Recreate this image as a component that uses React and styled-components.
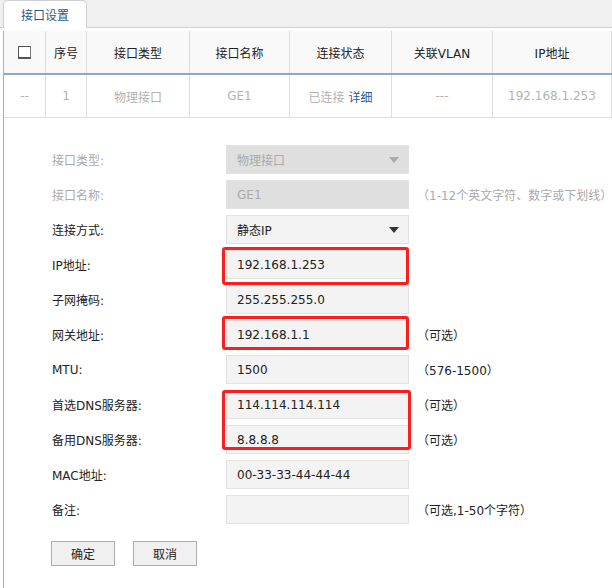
import React from 'react';
import styled, { createGlobalStyle } from 'styled-components';

const GlobalStyle = createGlobalStyle`
  body {
    margin: 0;
    background: #ffffff;
    font-family: "DejaVu Sans", "Noto Sans CJK SC", sans-serif;
    font-size: 12px;
    color: #222222;
  }
`;

const Page = styled.div`
  width: 612px;
  height: 588px;
  overflow: hidden;
  background: #ffffff;
`;

const TabBar = styled.div`
  height: 27px;
  background: #f0f0f0;
  border-bottom: 1px solid #cfcfcf;
  padding-left: 3px;
  display: flex;
  align-items: flex-end;
`;

const Tab = styled.div`
  width: 84px;
  height: 28px;
  margin-bottom: -1px;
  box-sizing: border-box;
  background: #ffffff;
  border: 1px solid #cfcfcf;
  border-bottom: none;
  border-radius: 5px 5px 0 0;
  display: flex;
  align-items: center;
  justify-content: center;
  color: #2b5886;
  font-size: 12px;
`;

const Content = styled.div`
  margin-top: 3px;
  margin-left: 3px;
  border-left: 1px solid #a3b3c4;
`;

const Table = styled.table`
  width: 100%;
  border-collapse: collapse;
  table-layout: fixed;
`;

const HeadCell = styled.th`
  width: ${(p) => p.$w || 'auto'};
  height: 42px;
  padding: 0;
  background: #f9f9f9;
  border-right: 1px solid #dddddd;
  border-bottom: 2px solid #8fa7bf;
  font-weight: normal;
  font-size: 12px;
  color: #222222;
  text-align: center;
`;

const Cell = styled.td`
  height: 42px;
  padding: 0;
  border-right: 1px solid #dddddd;
  border-bottom: 1px solid #dddddd;
  text-align: center;
  color: #b3b3b3;
  font-size: 12px;
  white-space: nowrap;
`;

const DetailLink = styled.span`
  color: #1c5c9a;
  margin-left: 4px;
`;

const CheckBox = styled.span`
  display: inline-block;
  width: 11px;
  height: 10px;
  border: 1px solid #555555;
  border-bottom-width: 2px;
  border-right-color: #777777;
  background: #ffffff;
  vertical-align: middle;
`;

const FormPanel = styled.div`
  position: relative;
  padding: 27px 0 40px 48px;
`;

const FormGrid = styled.div`
  display: grid;
  grid-template-columns: 174px 183px auto;
  row-gap: 6px;
  align-items: center;
`;

const Label = styled.div`
  color: ${(p) => (p.$disabled ? '#aaaaaa' : '#222222')};
  font-size: 12px;
`;

const Field = styled.input`
  box-sizing: border-box;
  width: 183px;
  height: 29px;
  margin: 0;
  padding: 0 10px;
  border: 1px solid #e2e2e2;
  background: ${(p) => (p.disabled ? '#dfdfdf' : '#f3f3f3')};
  color: ${(p) => (p.disabled ? '#aaaaaa' : '#222222')};
  font-family: "DejaVu Sans", "Noto Sans CJK SC", sans-serif;
  font-size: 12px;
  outline: none;
`;

const Select = styled.div`
  box-sizing: border-box;
  width: 183px;
  height: 29px;
  padding: 0 9px 0 10px;
  border: 1px solid #e2e2e2;
  background: ${(p) => (p.$disabled ? '#dfdfdf' : '#f3f3f3')};
  color: ${(p) => (p.$disabled ? '#aaaaaa' : '#222222')};
  display: flex;
  align-items: center;
  justify-content: space-between;
`;

const Arrow = styled.span`
  width: 0;
  height: 0;
  border-left: 5px solid transparent;
  border-right: 5px solid transparent;
  border-top: 6px solid ${(p) => (p.$disabled ? '#aaaaaa' : '#333333')};
`;

const Hint = styled.div`
  padding-left: 8px;
  color: ${(p) => (p.$muted ? '#aaaaaa' : '#222222')};
  font-size: 12px;
  white-space: nowrap;
`;

const ButtonRow = styled.div`
  display: flex;
  gap: 18px;
  margin-top: 17px;
  margin-left: -1px;
`;

const Button = styled.button`
  width: 64px;
  height: 25px;
  margin: 0;
  padding: 0;
  background: #f0f0f0;
  border: 1px solid #acacac;
  font-family: "DejaVu Sans", "Noto Sans CJK SC", sans-serif;
  font-size: 12px;
  color: #222222;
`;

const Mark = styled.div`
  position: absolute;
  left: 218px;
  box-sizing: border-box;
  border: 3px solid #fa1e1e;
  border-radius: 3px;
  pointer-events: none;
`;

const rows = [
  { label: '接口类型:', kind: 'select', value: '物理接口', disabled: true },
  { label: '接口名称:', value: 'GE1', disabled: true, hint: '（1-12个英文字符、数字或下划线）', muted: true },
  { label: '连接方式:', kind: 'select', value: '静态IP' },
  { label: 'IP地址:', value: '192.168.1.253' },
  { label: '子网掩码:', value: '255.255.255.0' },
  { label: '网关地址:', value: '192.168.1.1', hint: '（可选）' },
  { label: 'MTU:', value: '1500', hint: '（576-1500）' },
  { label: '首选DNS服务器:', value: '114.114.114.114', hint: '（可选）' },
  { label: '备用DNS服务器:', value: '8.8.8.8', hint: '（可选）' },
  { label: 'MAC地址:', value: '00-33-33-44-44-44' },
  { label: '备注:', value: '', hint: '（可选,1-50个字符）' },
];

const marks = [
  { top: 129, height: 38, width: 187 },
  { top: 198, height: 34, width: 187 },
  { top: 272, height: 60, width: 189 },
];

export default function App() {
  return (
    <Page>
      <GlobalStyle />
      <TabBar>
        <Tab>接口设置</Tab>
      </TabBar>
      <Content>
        <Table>
          <thead>
            <tr>
              <HeadCell $w="41px"><CheckBox /></HeadCell>
              <HeadCell $w="40px">序号</HeadCell>
              <HeadCell $w="102px">接口类型</HeadCell>
              <HeadCell $w="99px">接口名称</HeadCell>
              <HeadCell $w="101px">连接状态</HeadCell>
              <HeadCell $w="100px">关联VLAN</HeadCell>
              <HeadCell>IP地址</HeadCell>
            </tr>
          </thead>
          <tbody>
            <tr>
              <Cell>--</Cell>
              <Cell>1</Cell>
              <Cell>物理接口</Cell>
              <Cell>GE1</Cell>
              <Cell>已连接<DetailLink>详细</DetailLink></Cell>
              <Cell>---</Cell>
              <Cell>192.168.1.253</Cell>
            </tr>
          </tbody>
        </Table>
        <FormPanel>
          <FormGrid>
            {rows.map((r) => (
              <React.Fragment key={r.label}>
                <Label $disabled={r.disabled}>{r.label}</Label>
                {r.kind === 'select' ? (
                  <Select $disabled={r.disabled}>
                    <span>{r.value}</span>
                    <Arrow $disabled={r.disabled} />
                  </Select>
                ) : (
                  <Field disabled={r.disabled} value={r.value} readOnly />
                )}
                <Hint $muted={r.muted}>{r.hint}</Hint>
              </React.Fragment>
            ))}
          </FormGrid>
          <ButtonRow>
            <Button>确定</Button>
            <Button>取消</Button>
          </ButtonRow>
          {marks.map((m) => (
            <Mark key={m.top} style={{ top: m.top, height: m.height, width: m.width }} />
          ))}
        </FormPanel>
      </Content>
    </Page>
  );
}
